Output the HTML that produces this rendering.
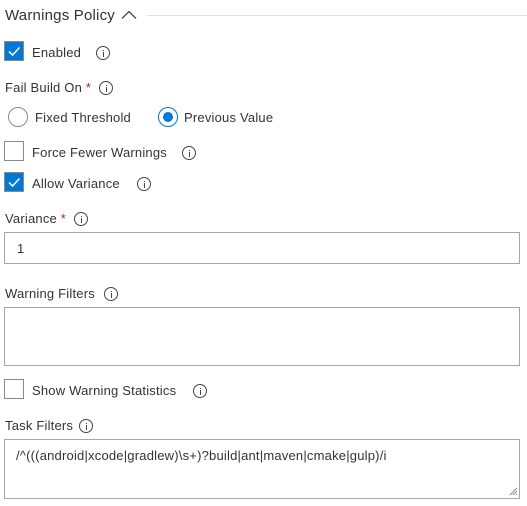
<!DOCTYPE html>
<html><head><style>
body{margin:0;width:527px;height:506px;background:#fff;font-family:"Liberation Sans",sans-serif;color:#333;font-size:13px;position:relative;overflow:hidden}
.a{position:absolute;white-space:nowrap;line-height:16px;letter-spacing:0.2px}
.cb{position:absolute;left:4px;width:18px;height:18px;border:1px solid #8a8a8a;background:#fff;box-sizing:content-box}
.cb.on{background:#0078d4;border-color:#8a8a8a}
.cb.on svg{position:absolute;left:2px;top:2px}
.i{position:absolute;width:14px;height:14px;border:1px solid #444;border-radius:50%;box-sizing:border-box}
.i:before{content:"";position:absolute;left:5.5px;top:2.5px;width:1px;height:1px;background:#444}
.i:after{content:"";position:absolute;left:5.5px;top:5px;width:1px;height:5px;background:#444}
.box{position:absolute;left:4px;width:516px;border:1px solid #a6a6a6;box-sizing:border-box;background:#fff}
.star{color:#a4262c}
</style></head><body>
<div class="a" style="left:5px;top:6px;font-size:15px;line-height:20px;color:#333">Warnings Policy</div>
<svg class="a" style="left:121px;top:10px" width="16" height="10" viewBox="0 0 16 10"><path d="M1 8.5 L8 1.5 L15 8.5" stroke="#444" stroke-width="1.3" fill="none"/></svg>
<div class="a" style="left:147px;top:15px;width:380px;height:1px;background:#e1e1e1"></div>

<div class="cb on" style="top:41px"><svg width="14" height="14" viewBox="0 0 14 14"><path d="M2 7.5 L5.5 11 L12.5 3.5" stroke="#fff" stroke-width="1.5" fill="none"/></svg></div>
<div class="a" style="left:32px;top:45px">Enabled</div>
<div class="i" style="left:96px;top:46px"></div>

<div class="a" style="left:5px;top:80px">Fail Build On <span class="star">*</span></div>
<div class="i" style="left:99px;top:81px"></div>

<div class="a" style="left:8px;top:107px;width:20px;height:20px;border:1px solid #8a8a8a;border-radius:50%;box-sizing:border-box"></div>
<div class="a" style="left:35px;top:110px">Fixed Threshold</div>
<div class="a" style="left:158px;top:107px;width:20px;height:20px;border:1px solid #0078d4;border-radius:50%;box-sizing:border-box"><div style="position:absolute;left:4px;top:4px;width:10px;height:10px;border-radius:50%;background:#0078d4"></div></div>
<div class="a" style="left:184px;top:110px">Previous Value</div>

<div class="cb" style="top:141px"></div>
<div class="a" style="left:32px;top:145px">Force Fewer Warnings</div>
<div class="i" style="left:182px;top:146px"></div>

<div class="cb on" style="top:172px"><svg width="14" height="14" viewBox="0 0 14 14"><path d="M2 7.5 L5.5 11 L12.5 3.5" stroke="#fff" stroke-width="1.5" fill="none"/></svg></div>
<div class="a" style="left:32px;top:176px">Allow Variance</div>
<div class="i" style="left:137px;top:177px"></div>

<div class="a" style="left:5px;top:211px">Variance <span class="star">*</span></div>
<div class="i" style="left:74px;top:212px"></div>
<div class="box" style="top:232px;height:32px"></div>
<div class="a" style="left:17px;top:241px">1</div>

<div class="a" style="left:5px;top:286px">Warning Filters</div>
<div class="i" style="left:104px;top:287px"></div>
<div class="box" style="top:307px;height:59px"></div>

<div class="cb" style="top:379px"></div>
<div class="a" style="left:32px;top:383px">Show Warning Statistics</div>
<div class="i" style="left:193px;top:384px"></div>

<div class="a" style="left:5px;top:418px">Task Filters</div>
<div class="i" style="left:79px;top:419px"></div>
<div class="box" style="top:439px;height:60px"></div>
<div class="a" style="left:16px;top:448px">/^(((android|xcode|gradlew)\s+)?build|ant|maven|cmake|gulp)/i</div>
<svg class="a" style="left:509px;top:487px" width="9" height="9" viewBox="0 0 9 9"><path d="M8 1 L1 8 M8 4 L4 8 M8 7 L7 8" stroke="#888" stroke-width="1"/></svg>
</body></html>
